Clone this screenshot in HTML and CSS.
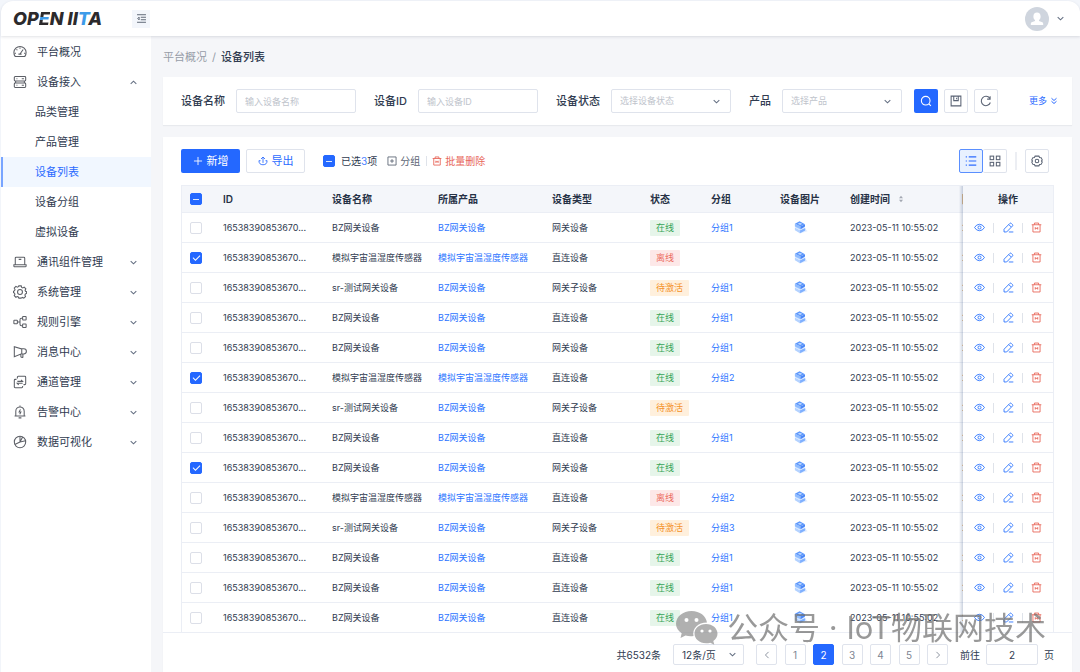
FILE: index.html
```html
<!DOCTYPE html>
<html lang="zh-CN">
<head>
<meta charset="utf-8">
<title>设备列表</title>
<link rel="stylesheet" href="styles.css">
</head>
<body>
<svg class="sprite" aria-hidden="true">
  <symbol id="i-gauge" viewBox="0 0 16 16"><path d="M2.600 13.200a7 7 0 1 1 10.800 0zM8 2.800v1.400M4 5l1 1M2 9.400h1.400M12.600 9.400H14M11.600 5.200 8.200 10M6.200 10.400h3.600"/></symbol>
  <symbol id="i-server" viewBox="0 0 16 16"><rect x="1.5" y="1.8" width="13" height="5" rx="1"/><rect x="1.5" y="9.2" width="13" height="5" rx="1"/><path d="M3 6.8v2.4M13 6.8v2.4M4 4.3h1M10 4.3h2.5M4 11.7h1M10 11.7h2.5"/></symbol>
  <symbol id="i-laptop" viewBox="0 0 16 16"><path d="M2.6 11V3.600q0-1 1-1h8.800q1 0 1 1V11M1 11.200h14v1.300q0 1-1 1H2q-1 0-1-1zM6.500 5h3"/></symbol>
  <symbol id="i-gear" viewBox="0 0 16 16"><path d="M6.6 1h2.8l.5 1.7 1.3.6 1.6-.9 1.9 2-.9 1.6.5 1.2 1.2.5v1.8l-1.4.8-.5 1.2.7 1.7-1.9 1.8-1.6-.8-1.1.5L9.300 15H6.700l-.6-1.300-1.200-.5-1.600.8-1.900-1.800.8-1.700-.5-1.200L.6 8.800V7.200l1.200-.8.5-1.200-.9-1.600 1.900-2 1.600.9 1.300-.6z"/><circle cx="8" cy="8" r="2.800"/></symbol>
  <symbol id="i-flow" viewBox="0 0 16 16"><rect x="1" y="6" width="4" height="4" rx=".6"/><rect x="11" y="1.800" width="4" height="4" rx=".6"/><rect x="11" y="10.200" width="4" height="4" rx=".6"/><path d="M5 8h3M11 3.800h-1.500Q8 3.800 8 5.300v5.400q0 1.500 1.500 1.500H11"/></symbol>
  <symbol id="i-horn" viewBox="0 0 16 16"><path d="M1.500 2v11.500L10 10V4.500zM10 4.200h2.300a2.800 2.800 0 0 1 0 6H10M9 10.500v3q1 1 2.300.5v-3.700"/></symbol>
  <symbol id="i-swap" viewBox="0 0 16 16"><path d="M5 4V2.500q0-1 1-1h7.500q1 0 1 1V10q0 1-1 1H12M11 12.500v1q0 1-1 1H2.500q-1 0-1-1V6q0-1 1-1H4M5 7.300h6L9.300 5.500M11 9.500H4.800l1.700 1.800"/></symbol>
  <symbol id="i-bell" viewBox="0 0 16 16"><path d="M1.800 12.500h12.400M3.200 12.500V7a4.800 4.800 0 0 1 9.600 0v5.500M8 .7v1.500M6.400 14.700h3.200M8.500 5 7 8h2l-1.300 2.600"/></symbol>
  <symbol id="i-pie" viewBox="0 0 16 16"><circle cx="8" cy="8" r="6.500"/><path d="M8 8V1.500M8 8l6.300-1.500M8 8l-6 2.800M8 8l3-5.800"/></symbol>
  <symbol id="i-down" viewBox="0 0 16 16"><path d="m3 5.500 5 5 5-5"/></symbol>
  <symbol id="i-up" viewBox="0 0 16 16"><path d="m3 10.500 5-5 5 5"/></symbol>
  <symbol id="i-left" viewBox="0 0 16 16"><path d="m10.500 3-5 5 5 5"/></symbol>
  <symbol id="i-right" viewBox="0 0 16 16"><path d="m5.500 3 5 5-5 5"/></symbol>
  <symbol id="i-fold" viewBox="0 0 16 16"><path d="M1.500 2.500h13M7 6.200h7.500M7 9.800h7.500M1.500 13.500h13M4.500 6 2.500 8l2 2z"/></symbol>
  <symbol id="i-search" viewBox="0 0 16 16"><circle cx="7.600" cy="7.600" r="5.800"/><path d="m11.800 11.800 2.700 2.700"/></symbol>
  <symbol id="i-save" viewBox="0 0 16 16"><path d="M1.500 1.500h13v13h-13zM5 1.500v6h6v-6M8.800 3.500v2"/></symbol>
  <symbol id="i-refresh" viewBox="0 0 16 16"><path d="M13.800 10A6.200 6.200 0 1 1 13 4.400M13.500 1.500v4h-4"/></symbol>
  <symbol id="i-more" viewBox="0 0 16 16"><path d="m3 2.500 5 4.500 5-4.500M3 8.500 8 13l5-4.500"/></symbol>
  <symbol id="i-plus" viewBox="0 0 16 16"><path d="M8 1.500v13M1.500 8h13"/></symbol>
  <symbol id="i-export" viewBox="0 0 16 16"><path d="M8 11V1.800M4.800 4.800 8 1.600l3.200 3.200M4 7.500H1.500a6.500 6.500 0 0 0 13 0H12"/></symbol>
  <symbol id="i-group" viewBox="0 0 16 16"><path d="M1.500 1.500h13v13h-13zM8 5v6M5 8h6"/></symbol>
  <symbol id="i-trash" viewBox="0 0 16 16"><path d="M1 4h14M5 4V1.500h6V4M2.800 4v10.500h10.400V4M6.200 7.500v3.500M9.800 7.500v3.500M6.200 9.200h3.600"/></symbol>
  <symbol id="i-list" viewBox="0 0 16 16"><path d="M5 2.500h10M5 8h10M5 13.500h10M1 2.500h1.500M1 8h1.500M1 13.500h1.500"/></symbol>
  <symbol id="i-grid" viewBox="0 0 16 16"><rect x="1.500" y="1.500" width="4.700" height="4.700"/><rect x="9.800" y="1.500" width="4.700" height="4.700"/><rect x="1.500" y="9.800" width="4.700" height="4.700"/><rect x="9.800" y="9.800" width="4.700" height="4.700"/></symbol>
  <symbol id="i-nut" viewBox="0 0 16 16"><path d="M5.500 1.500h5l1 1.800 2 .2 1.500 3-1 1.500 1 1.500-1.500 3-2 .2-1 1.800h-5l-1-1.800-2-.2L1 9.500 2 8 1 6.500l1.500-3 2-.2z"/><circle cx="8" cy="8" r="2.400"/></symbol>
  <symbol id="i-eye" viewBox="0 0 16 16"><path d="M.8 8Q3.500 3.300 8 3.300T15.200 8Q12.500 12.700 8 12.700T.8 8z"/><circle cx="8" cy="8" r="2.200"/></symbol>
  <symbol id="i-edit" viewBox="0 0 16 16"><path d="M1.500 14.500v-4L10 2q1-1 2 0l1.800 1.800q1 1 0 2L5.300 14.500zM8.500 3.800l3.500 3.500M8.500 14.500H15"/></symbol>
  <symbol id="i-device" viewBox="0 0 16 16"><path fill="#e3eeff" d="m7 14.500 8.500-2.500-3-3.500-8 3z"/><path fill="#b4d2ff" d="M2 8v3l5.500 3V11z"/><path fill="#7fb0ff" d="m7.500 11 5.500-2.600v2.800L7.500 14z"/><path fill="#d3e5ff" d="M2 8l5.200-3L13 8.200 7.500 11z"/><path fill="#8fbcff" d="M2 4v2.800l6 3V7z"/><path fill="#4a86f7" d="m8 7 4.800-2.600V7L8 9.800z"/><path fill="#5d97fb" d="m2 4 5-2.600 5.800 3L8 7z"/><path fill="#bcd8ff" d="m5 4 2.200-1.200 2.600 1.300L7.800 5.200z"/></symbol>
</svg>

<div class="app">
  <header class="topbar">
    <a class="logo" href="#">OP<span class="logo-e">E</span>N II<span class="logo-t">T</span>A</a>
    <button class="fold" type="button" aria-label="收起菜单"><svg class="ico"><use href="#i-fold"/></svg></button>
    <button class="user" type="button" aria-label="用户菜单">
      <svg class="avatar" viewBox="0 0 24 24"><circle cx="12" cy="12" r="12" fill="#cfd5de"/><path fill="#fff" d="M12 5.500c2.300 0 3.600 1.700 3.600 3.900 0 1.700-.7 2.800-1.600 3.600v.9l3.300 1.400c.7.300.9.900.9 1.700v.9H5.800V17c0-.8.2-1.400.9-1.700l3.300-1.400V13c-.9-.8-1.600-1.900-1.600-3.600 0-2.200 1.300-3.900 3.600-3.900z"/></svg>
      <svg class="ico chev"><use href="#i-down"/></svg>
    </button>
  </header>

  <div class="shell">
    <nav class="sidebar">
      <a class="item" href="#"><svg class="ico nav-ico"><use href="#i-gauge"/></svg>平台概况</a>
      <a class="item" href="#"><svg class="ico nav-ico"><use href="#i-server"/></svg>设备接入<svg class="ico chev"><use href="#i-up"/></svg></a>
      <a class="item sub" href="#">品类管理</a>
      <a class="item sub" href="#">产品管理</a>
      <a class="item sub active" href="#">设备列表</a>
      <a class="item sub" href="#">设备分组</a>
      <a class="item sub" href="#">虚拟设备</a>
      <a class="item" href="#"><svg class="ico nav-ico"><use href="#i-laptop"/></svg>通讯组件管理<svg class="ico chev"><use href="#i-down"/></svg></a>
      <a class="item" href="#"><svg class="ico nav-ico"><use href="#i-gear"/></svg>系统管理<svg class="ico chev"><use href="#i-down"/></svg></a>
      <a class="item" href="#"><svg class="ico nav-ico"><use href="#i-flow"/></svg>规则引擎<svg class="ico chev"><use href="#i-down"/></svg></a>
      <a class="item" href="#"><svg class="ico nav-ico"><use href="#i-horn"/></svg>消息中心<svg class="ico chev"><use href="#i-down"/></svg></a>
      <a class="item" href="#"><svg class="ico nav-ico"><use href="#i-swap"/></svg>通道管理<svg class="ico chev"><use href="#i-down"/></svg></a>
      <a class="item" href="#"><svg class="ico nav-ico"><use href="#i-bell"/></svg>告警中心<svg class="ico chev"><use href="#i-down"/></svg></a>
      <a class="item" href="#"><svg class="ico nav-ico"><use href="#i-pie"/></svg>数据可视化<svg class="ico chev"><use href="#i-down"/></svg></a>
    </nav>

    <main class="main">
      <div class="crumbs"><a href="#">平台概况</a><span class="slash">/</span><span class="here">设备列表</span></div>

      <form class="card filters">
        <div class="field"><label for="f-name">设备名称</label><input class="control" id="f-name" type="text" placeholder="输入设备名称"></div>
        <div class="field"><label for="f-id">设备ID</label><input class="control" id="f-id" type="text" placeholder="输入设备ID"></div>
        <div class="field"><label for="f-state">设备状态</label><span class="pick"><select class="control" id="f-state"><option>选择设备状态</option></select><svg class="ico chev"><use href="#i-down"/></svg></span></div>
        <div class="field"><label for="f-product">产品</label><span class="pick"><select class="control" id="f-product"><option>选择产品</option></select><svg class="ico chev"><use href="#i-down"/></svg></span></div>
        <div class="filter-actions">
          <button class="square primary" type="button" aria-label="搜索"><svg class="ico"><use href="#i-search"/></svg></button>
          <button class="square" type="button" aria-label="保存"><svg class="ico"><use href="#i-save"/></svg></button>
          <button class="square" type="button" aria-label="刷新"><svg class="ico"><use href="#i-refresh"/></svg></button>
        </div>
        <a class="more" href="#">更多<svg class="ico"><use href="#i-more"/></svg></a>
      </form>

      <section class="card list">
        <div class="toolbar">
          <button class="btn primary" type="button"><svg class="ico"><use href="#i-plus"/></svg>新增</button>
          <button class="btn outline" type="button"><svg class="ico"><use href="#i-export"/></svg>导出</button>
          <label class="picked"><input class="check partial" type="checkbox"><span>已选<b>3</b>项</span></label>
          <button class="link" type="button"><svg class="ico"><use href="#i-group"/></svg>分组</button>
          <span class="bar"></span>
          <button class="link danger" type="button"><svg class="ico"><use href="#i-trash"/></svg>批量删除</button>
          <div class="views">
            <button class="square on" type="button" aria-label="列表视图"><svg class="ico"><use href="#i-list"/></svg></button>
            <button class="square" type="button" aria-label="卡片视图"><svg class="ico"><use href="#i-grid"/></svg></button>
          </div>
          <span class="bar tall"></span>
          <button class="square" type="button" aria-label="设置"><svg class="ico"><use href="#i-nut"/></svg></button>
        </div>

        <div class="table-wrap">
          <table>
            <colgroup><col class="c-check"><col class="c-id"><col class="c-name"><col class="c-product"><col class="c-type"><col class="c-state"><col class="c-group"><col class="c-pic"><col class="c-time"><col class="c-last"><col class="c-ops"></colgroup>
            <thead>
              <tr><th><input class="check partial" type="checkbox" aria-label="全选"></th><th>ID</th><th>设备名称</th><th>所属产品</th><th>设备类型</th><th>状态</th><th>分组</th><th class="mid">设备图片</th><th>创建时间<svg class="sort" viewBox="0 0 8 12"><path d="M4 1 7 5H1zM4 11 1 7h6z"/></svg></th><th class="cut">固件更新时间</th><th class="mid ops">操作</th></tr>
            </thead>
            <tbody id="rows"></tbody>
          </table>
        </div>

        <footer class="pager">
          <span>共6532条</span>
          <span class="pick size"><select class="control" aria-label="每页条数"><option>12条/页</option></select><svg class="ico chev"><use href="#i-down"/></svg></span>
          <div class="pages">
            <button type="button" aria-label="上一页"><svg class="ico"><use href="#i-left"/></svg></button>
            <button type="button">1</button>
            <button class="current" type="button">2</button>
            <button type="button">3</button>
            <button type="button">4</button>
            <button type="button">5</button>
            <button type="button" aria-label="下一页"><svg class="ico"><use href="#i-right"/></svg></button>
          </div>
          <label class="jump">前往<input class="control" type="text" value="2">页</label>
        </footer>
      </section>
    </main>
  </div>

  <div class="watermark">
    <svg viewBox="0 0 42 34"><path fill="#8f8f8f" d="M15.500 0C24 0 30 5 31 11.500c-9 0-15 6-13.500 13.500-3 .4-5.500.2-8-.6L4.500 27l1.200-4.800C2 20 0 16.600 0 12.800 0 5.600 7 0 15.500 0z"/><path fill="#8f8f8f" d="M30 13c6.600 0 11.500 4.400 11.500 9.600 0 3-1.600 5.600-4.200 7.400l1 3.800-4-2.100c-1.300.4-2.800.6-4.300.6-6.600 0-11.500-4.400-11.500-9.700S23.400 13 30 13z"/><g fill="#fff"><circle cx="10.500" cy="9" r="2"/><circle cx="20.500" cy="9" r="2"/><circle cx="26" cy="20" r="1.600"/><circle cx="34" cy="20" r="1.600"/></g></svg>
    <span>公众号 · IoT物联网技术</span>
  </div>
</div>
<script src="app.js"></script>
</body>
</html>
```

FILE: styles.css
```css
* { box-sizing: border-box; }

body {
  margin: 0;
  background: #f3f6fb;
  color: #303b50;
  font: 11px/16px Inter, "Noto Sans CJK SC", sans-serif;
}

a { color: inherit; text-decoration: none; }

button, input, select { font: inherit; color: inherit; margin: 0; }

button {
  display: inline-flex;
  align-items: center;
  justify-content: center;
  padding: 0;
  border: 0;
  background: none;
}

.sprite { position: absolute; width: 0; height: 0; }

.ico {
  flex: none;
  width: 10px;
  height: 10px;
  fill: none;
  stroke: currentColor;
  stroke-width: 1.4;
}

.chev { width: 9px; height: 9px; stroke-width: 1.8; color: #626d80; }

.app {
  position: relative;
  display: flex;
  flex-direction: column;
  height: 100vh;
  padding: 1px 0 0 1px;
  overflow: hidden;
}

/* top bar */
.topbar {
  position: relative;
  z-index: 2;
  display: flex;
  align-items: center;
  flex: none;
  height: 35px;
  padding: 0 15px 0 12px;
  border-radius: 12px 12px 0 0;
  background: #fff;
  box-shadow: 0 1px 3px rgba(40, 50, 70, .14);
}

.logo {
  width: 119px;
  color: #2c2a2c;
  font-size: 18px;
  font-style: italic;
  font-weight: 800;
  line-height: 20px;
  white-space: nowrap;
}

.logo-e {
  background: linear-gradient(#2c2a2c 45%, #3d9be9 45%, #3d9be9 58%, #2c2a2c 58%);
  background-clip: text;
  color: transparent;
}

.logo-t { color: #3d9be9; }

.fold {
  width: 18px;
  height: 18px;
  background: #f3f6fb;
  color: #5d6675;
}

.fold .ico { width: 11px; height: 11px; }

.user { gap: 7px; margin-left: auto; }
.avatar { width: 24px; height: 24px; }

.shell { display: flex; flex: 1; min-height: 0; }

/* side menu */
.sidebar {
  flex: none;
  width: 150px;
  padding-top: 1px;
  background: #fff;
  box-shadow: 1px 0 2px rgba(40, 50, 70, .08);
}

.item {
  display: flex;
  align-items: center;
  height: 30px;
  padding: 0 13px 0 12px;
}

.nav-ico { width: 14px; height: 14px; margin-right: 10px; stroke-width: 1.2; color: #5c5f66; }
.item .chev { margin-left: auto; }
.item.sub { padding-left: 34px; }

.item.active {
  background: #f1f7ff;
  box-shadow: inset 2px 0 #79a5ff;
  color: #2b6bff;
}

/* content */
.main {
  display: flex;
  flex: 1;
  flex-direction: column;
  min-width: 0;
  padding: 13px 8px 0 12px;
  background: #f5f6f9;
}

.crumbs { margin-bottom: 12px; color: #979da8; }
.slash { margin: 0 5px; }
.here { color: #303b50; font-weight: 500; }

.card { background: #fff; box-shadow: 0 1px 1px rgba(40, 50, 70, .06); }

.filters {
  display: flex;
  align-items: center;
  flex: none;
  gap: 18px;
  padding: 12px 14px 12px 18px;
}

.field { display: flex; align-items: center; gap: 11px; font-weight: 500; white-space: nowrap; }

.control {
  width: 120px;
  height: 24px;
  padding: 0 8px;
  border: 1px solid #dfe3ec;
  border-radius: 2px;
  background: #fff;
  appearance: none;
}

.field .control { color: #c0c4cc; font-size: 9px; font-weight: 400; }
.control::placeholder { color: #c0c4cc; }

.pick { position: relative; display: inline-flex; }
.pick .chev { position: absolute; top: 8px; right: 10px; pointer-events: none; }

.filter-actions { display: flex; gap: 6px; margin-left: -6px; }

.square {
  width: 24px;
  height: 24px;
  border: 1px solid #dfe3ec;
  border-radius: 2px;
  background: #fff;
  color: #5a6374;
}

.square .ico { width: 12px; height: 12px; }

.primary { border: 0; border-radius: 2px; background: #2468ff; color: #fff; }

.more { display: flex; align-items: center; gap: 3px; margin-left: auto; color: #2b6bff; font-size: 9px; }
.more .ico { width: 8px; height: 8px; stroke-width: 2; }

.list { display: flex; flex: 1; flex-direction: column; min-height: 0; margin-top: 12px; }

.toolbar {
  display: flex;
  align-items: center;
  flex: none;
  padding: 12px 23px 12px 18px;
  font-size: 10px;
}

.btn { gap: 4px; width: 59px; height: 24px; font-size: 11px; }
.outline { margin-left: 6px; border: 1px solid #dfe3ec; border-radius: 2px; color: #2b6bff; }
.picked { display: flex; align-items: center; gap: 6px; margin-left: 18px; }
.picked b { color: #4c82ff; font-weight: 400; }
.link { gap: 3px; margin-left: 10px; color: #5d6675; }
.bar { width: 1px; height: 10px; margin-left: 6px; background: #dfe3ea; }
.link.danger { margin-left: 5px; }
.danger { color: #e8675a; }
.views { display: flex; margin-left: auto; }
.views .square + .square { border-left: 0; }
.square.on { border-color: #5a8fff; background: #e8f1ff; color: #2b6bff; }
.tall { width: 2px; height: 18px; margin: 0 8px; background: #eceef3; }

.check {
  display: block;
  flex: none;
  width: 12px;
  height: 12px;
  border: 1px solid #dcdfe8;
  border-radius: 2px;
  background: #fff;
  appearance: none;
}

.check.partial, .check:checked { border-color: #2468ff; background: #2468ff; }

.check.partial::before {
  content: "";
  display: block;
  width: 6px;
  height: 1px;
  margin: 5px 2px;
  background: #dbe7ff;
}

.check:checked::before {
  content: "";
  display: block;
  width: 6px;
  height: 3px;
  margin: 2px;
  border: solid #fff;
  border-width: 0 0 1px 1px;
  rotate: -45deg;
}

/* table */
.table-wrap {
  flex: 1;
  min-height: 0;
  margin: 0 18px;
  overflow: hidden;
  border: solid #ebeef5;
  border-width: 1px 1px 0;
}

table {
  width: 100%;
  min-width: 871px;
  border-spacing: 0;
  table-layout: fixed;
}

.c-check { width: 33px; }
.c-id { width: 109px; }
.c-name { width: 106px; }
.c-product { width: 114px; }
.c-type { width: 98px; }
.c-state { width: 61px; }
.c-group { width: 55px; }
.c-pic { width: 84px; }
.c-time { width: 112px; }
.c-ops { width: 90px; }

th, td {
  padding: 0 8px;
  border-bottom: 1px solid #ebeef5;
  background: #fff;
  text-align: left;
  white-space: nowrap;
}

th { height: 27px; background: #f4f6fa; color: #263145; font-size: 10px; font-weight: 600; }
td { height: 30px; font-size: 9px; }
td a { color: #2b74ff; }
.mid { text-align: center; }
.cut { padding-right: 0; overflow: hidden; }

.sort { width: 6px; height: 8px; margin-left: 8px; fill: #a3a8b2; }
.device { display: block; width: 15px; height: 15px; margin: 0 auto; }

.tag { display: inline-block; padding: 0 6px; border-radius: 1px; }
.online { background: #e6f5ea; color: #35a457; }
.offline { background: #fde8e8; color: #ec6a5e; }
.pending { background: #fff0dd; color: #f5922a; }

.ops { position: sticky; right: 0; }

.ops::before {
  content: "";
  position: absolute;
  top: 0;
  bottom: -1px;
  left: -4px;
  width: 4px;
  background: linear-gradient(to left, rgba(70, 95, 140, .28), rgba(70, 95, 140, 0));
}

.op-list { display: flex; align-items: center; justify-content: space-between; padding: 0 3px; }
.op-list .bar { margin: 0; }
.op-list button { color: #2b74ff; }
.op-list .danger { color: #e8675a; }
.op-list .ico { width: 11px; height: 11px; stroke-width: 1.3; }

/* pagination */
.pager {
  display: flex;
  align-items: center;
  justify-content: flex-end;
  flex: none;
  gap: 12px;
  padding: 11px 18px 7px;
  border-top: 1px solid #ebeef5;
  font-size: 10px;
}

.pager .control { height: 21px; }
.size .control { width: 71px; }
.size .chev { top: 6px; right: 7px; }
.pages { display: flex; justify-content: space-between; width: 192px; }

.pages button {
  width: 21px;
  height: 21px;
  border: 1px solid #dfe3ec;
  border-radius: 2px;
  color: #7d8592;
}

.pages .current { border-color: #2468ff; background: #2468ff; color: #fff; }
.jump { display: flex; align-items: center; gap: 6px; }
.jump .control { width: 52px; text-align: center; }

.watermark {
  position: absolute;
  z-index: 3;
  right: 34px;
  bottom: 26px;
  display: flex;
  align-items: center;
  gap: 9px;
  color: #6e6e6e;
  font-size: 31px;
  line-height: 36px;
  opacity: .7;
  pointer-events: none;
}

.watermark svg { width: 42px; height: 34px; }
```

FILE: app.js
```js
const states = { online: "在线", offline: "离线", pending: "待激活" };
const BZ = "BZ网关设备";
const SENSOR = "模拟宇宙温湿度传感器";
const SR = "sr-测试网关设备";

// name, product, type, state, group, checked
const devices = [
  [BZ, BZ, "网关设备", "online", "分组1", false],
  [SENSOR, SENSOR, "直连设备", "offline", "", true],
  [SR, BZ, "网关子设备", "pending", "分组1", false],
  [BZ, BZ, "直连设备", "online", "分组1", false],
  [BZ, BZ, "网关设备", "online", "分组1", false],
  [SENSOR, SENSOR, "直连设备", "online", "分组2", true],
  [SR, BZ, "网关子设备", "pending", "", false],
  [BZ, BZ, "直连设备", "online", "分组1", false],
  [BZ, BZ, "网关设备", "online", "", true],
  [SENSOR, SENSOR, "直连设备", "offline", "分组2", false],
  [SR, BZ, "网关子设备", "pending", "分组3", false],
  [BZ, BZ, "直连设备", "online", "分组1", false],
  [BZ, BZ, "直连设备", "online", "分组1", false],
  [BZ, BZ, "直连设备", "online", "分组1", false]
];

const icon = id => `<svg class="ico"><use href="#${id}"/></svg>`;

document.getElementById("rows").innerHTML = devices.map(([name, product, type, state, group, checked]) => `
  <tr>
    <td><input class="check" type="checkbox" aria-label="选择${name}"${checked ? " checked" : ""}></td>
    <td>16538390853670...</td>
    <td>${name}</td>
    <td><a href="#">${product}</a></td>
    <td>${type}</td>
    <td><span class="tag ${state}">${states[state]}</span></td>
    <td>${group ? `<a href="#">${group}</a>` : ""}</td>
    <td class="mid"><svg class="device"><use href="#i-device"/></svg></td>
    <td>2023-05-11 10:55:02</td>
    <td class="cut">2023-05-11 10:55:02</td>
    <td class="ops"><div class="op-list">
      <button type="button" aria-label="查看">${icon("i-eye")}</button><span class="bar"></span>
      <button type="button" aria-label="编辑">${icon("i-edit")}</button><span class="bar"></span>
      <button type="button" class="danger" aria-label="删除">${icon("i-trash")}</button>
    </div></td>
  </tr>`).join("");
```
